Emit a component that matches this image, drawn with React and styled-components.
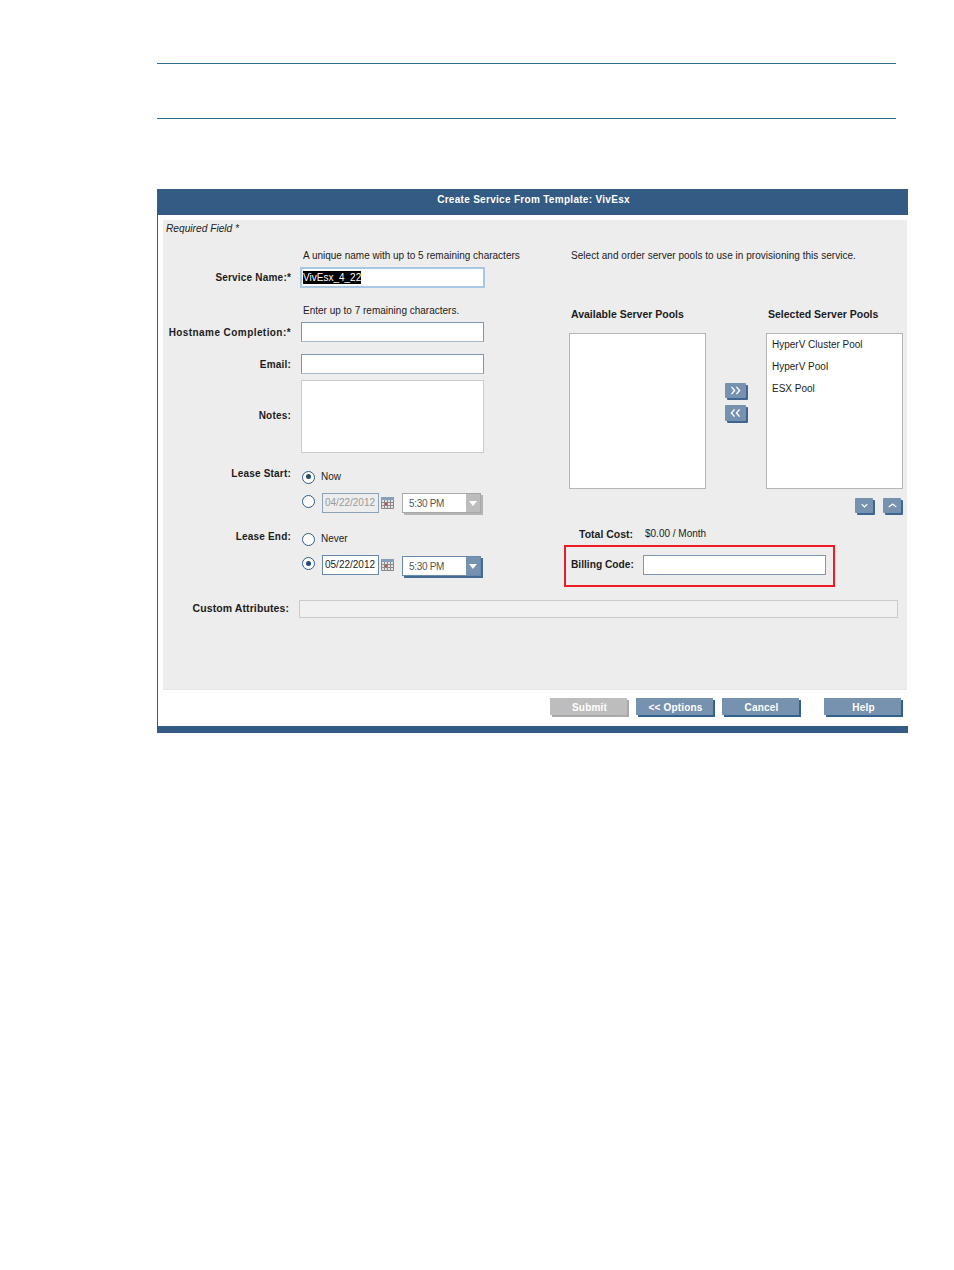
import React from 'react';
import styled, { createGlobalStyle } from 'styled-components';

const GlobalStyle = createGlobalStyle`
  html, body {
    margin: 0;
    padding: 0;
    background: #fff;
    font-family: "Liberation Sans", Arial, sans-serif;
    font-size: 10px;
    color: #1c1c1c;
  }
`;

const ChevronsRight = () => (
  <svg width="11" height="9" viewBox="0 0 12 10" fill="none" stroke="#fff" strokeWidth="1.5">
    <path d="M1.5 1l3.5 4-3.5 4M7 1l3.5 4L7 9" />
  </svg>
);

const ChevronsLeft = () => (
  <svg width="11" height="10" viewBox="0 0 12 10" fill="none" stroke="#fff" strokeWidth="1.5">
    <path d="M5 1L1.5 5 5 9M10.5 1L7 5l3.5 4" />
  </svg>
);

const ChevronDown = () => (
  <svg width="7" height="5" viewBox="0 0 10 6" fill="none" stroke="#fff" strokeWidth="1.8">
    <path d="M1 1l4 4 4-4" />
  </svg>
);

const ChevronUp = () => (
  <svg width="9" height="5" viewBox="0 0 12 6" fill="none" stroke="#fff" strokeWidth="1.6">
    <path d="M1 5l5-4 5 4" />
  </svg>
);

const CalendarIcon = () => (
  <svg width="13" height="12" viewBox="0 0 13 12">
    <rect x="0" y="0" width="13" height="12" fill="#e4e4e4" />
    <rect x="0" y="0" width="13" height="3" fill="#86a0bb" />
    <path d="M.5 3v8.5h12V3M3.5 3v8.5M6.5 3v8.5M9.5 3v8.5M.5 5.5h12M.5 8.5h12" stroke="#8a8a8a" fill="none" />
    <rect x="4" y="6" width="2" height="2" fill="#e8404a" />
  </svg>
);

const App = () => (
  <>
    <GlobalStyle />
    <Page>
      <RuleBlock />
      <Panel>
        <PanelHeader>Create Service From Template: VivEsx</PanelHeader>
        <PanelBody>
          <FormArea>
            <Required>Required Field *</Required>
            <Columns>
              <LeftColumn>
                <HintRow $top={12}>A unique name with up to 5 remaining characters</HintRow>
                <Row $top={3}>
                  <Label>Service Name:*</Label>
                  <FocusInput><Selected>VivEsx_4_22</Selected></FocusInput>
                </Row>
                <HintRow $top={15}>Enter up to 7 remaining characters.</HintRow>
                <Row $top={3}>
                  <Label $wide>Hostname Completion:*</Label>
                  <TextBox />
                </Row>
                <Row $top={12}>
                  <Label>Email:</Label>
                  <TextBox />
                </Row>
                <Row $top={6}>
                  <Label $up>Notes:</Label>
                  <NotesBox />
                </Row>
                <TopRow $top={14}>
                  <TopLabel>Lease Start:</TopLabel>
                  <ChoiceLine>
                    <Radio $checked />
                    <ChoiceText>Now</ChoiceText>
                  </ChoiceLine>
                </TopRow>
                <DateLine $top={6}>
                  <Radio $raised />
                  <DateBox $disabled>04/22/2012</DateBox>
                  <CalendarSlot><CalendarIcon /></CalendarSlot>
                  <TimeSelect $disabled>
                    <TimeText>5:30 PM</TimeText>
                    <TimeArrow $disabled />
                  </TimeSelect>
                </DateLine>
                <TopRow $top={14}>
                  <TopLabel $tall>Lease End:</TopLabel>
                  <ChoiceLine>
                    <Radio />
                    <ChoiceText>Never</ChoiceText>
                  </ChoiceLine>
                </TopRow>
                <DateLine $top={6}>
                  <Radio $checked $raised />
                  <DateBox>05/22/2012</DateBox>
                  <CalendarSlot><CalendarIcon /></CalendarSlot>
                  <TimeSelect $lower>
                    <TimeText>5:30 PM</TimeText>
                    <TimeArrow />
                  </TimeSelect>
                </DateLine>
              </LeftColumn>
              <RightColumn>
                <HintLine>Select and order server pools to use in provisioning this service.</HintLine>
                <PoolHeadings>
                  <PoolHeading>Available Server Pools</PoolHeading>
                  <PoolHeading>Selected Server Pools</PoolHeading>
                </PoolHeadings>
                <PoolLists>
                  <PoolList />
                  <Movers>
                    <SmallButton $w={21} $h={15}><ChevronsRight /></SmallButton>
                    <SmallButton $w={21} $h={16}><ChevronsLeft /></SmallButton>
                  </Movers>
                  <PoolList>
                    <PoolItem>HyperV Cluster Pool</PoolItem>
                    <PoolItem>HyperV Pool</PoolItem>
                    <PoolItem>ESX Pool</PoolItem>
                  </PoolList>
                </PoolLists>
                <Reorder>
                  <SmallButton $w={18} $h={15}><ChevronDown /></SmallButton>
                  <SmallButton $w={18} $h={15}><ChevronUp /></SmallButton>
                </Reorder>
                <CostRow>
                  <CostLabel>Total Cost:</CostLabel>
                  <span>$0.00 / Month</span>
                </CostRow>
                <BillingBox>
                  <BillingLabel>Billing Code:</BillingLabel>
                  <BillingInput />
                </BillingBox>
              </RightColumn>
            </Columns>
            <CustomRow>
              <CustomLabel>Custom Attributes:</CustomLabel>
              <CustomBox />
            </CustomRow>
          </FormArea>
          <Footer>
            <FooterButton $disabled>Submit</FooterButton>
            <FooterButton>&lt;&lt; Options</FooterButton>
            <FooterButton>Cancel</FooterButton>
            <FooterButton $gap={25}>Help</FooterButton>
          </Footer>
        </PanelBody>
        <PanelBar />
      </Panel>
    </Page>
  </>
);

export default App;

const Page = styled.div`
  width: 954px;
  height: 1270px;
  padding: 63px 0 0 157px;
  box-sizing: border-box;
`;

const RuleBlock = styled.div`
  width: 739px;
  height: 56px;
  box-sizing: border-box;
  border-top: 1px solid #2f6b8f;
  border-bottom: 1px solid #2f6b8f;
`;

const Panel = styled.div`
  width: 751px;
  margin-top: 70px;
`;

const PanelHeader = styled.div`
  height: 26px;
  padding-left: 2px;
  box-sizing: border-box;
  background: #335b84;
  color: #fff;
  font-weight: bold;
  font-size: 10px;
  letter-spacing: 0.3px;
  line-height: 21px;
  text-align: center;
`;

const PanelBody = styled.div`
  border-left: 1px solid #335b84;
  padding: 5px 1px 0 5px;
  background: #fff;
`;

const FormArea = styled.div`
  height: 469px;
  background: #ededed;
  box-sizing: border-box;
`;

const Required = styled.div`
  height: 16px;
  padding: 1px 0 0 3px;
  box-sizing: border-box;
  line-height: 15px;
  font-style: italic;
  font-size: 10.2px;
`;

const Columns = styled.div`
  display: flex;
  height: 362px;
`;

const LeftColumn = styled.div`
  width: 406px;
`;

const RightColumn = styled.div`
  width: 338px;
`;

const HintRow = styled.div`
  margin-top: ${(p) => p.$top}px;
  height: 16px;
  line-height: 16px;
  padding-left: 140px;
  font-size: 10px;
`;

const Row = styled.div`
  display: flex;
  align-items: center;
  column-gap: 10px;
  margin-top: ${(p) => p.$top}px;
`;

const TopRow = styled(Row)`
  align-items: flex-start;
  height: 20px;
`;

const Label = styled.div`
  width: 128px;
  margin-top: ${(p) => (p.$up ? -2 : 0)}px;
  text-align: right;
  font-weight: bold;
  font-size: 10px;
  letter-spacing: ${(p) => (p.$wide ? 0.43 : 0.2)}px;
  white-space: nowrap;
`;

const TopLabel = styled(Label)`
  line-height: ${(p) => (p.$tall ? 16 : 14)}px;
`;

const TextBox = styled.div`
  width: 183px;
  height: 20px;
  box-sizing: border-box;
  background: #fff;
  border: 1px solid #7d97b3;
  border-bottom-color: #a9b9cb;
`;

const FocusInput = styled.div`
  width: 185px;
  height: 21px;
  margin-left: -1px;
  box-sizing: border-box;
  background: #fff;
  border: 2px solid #a9c6e4;
  padding: 2px 1px;
  display: flex;
  align-items: center;
`;

const Selected = styled.span`
  background: #000;
  color: #fff;
  font-size: 10px;
  line-height: 13px;
`;

const NotesBox = styled.div`
  width: 183px;
  height: 73px;
  box-sizing: border-box;
  background: #fff;
  border: 1px solid #cbcbcb;
`;

const ChoiceLine = styled.div`
  display: flex;
  align-items: center;
  height: 20px;
  column-gap: 6px;
  margin-left: 1px;
`;

const ChoiceText = styled.span`
  font-size: 10px;
  margin-top: -2px;
`;

const Radio = styled.span`
  position: relative;
  flex: none;
  width: 13px;
  height: 13px;
  box-sizing: border-box;
  border: 1.5px solid #2f5b86;
  border-radius: 50%;
  background: #fff;
  align-self: ${(p) => (p.$raised ? 'flex-start' : 'center')};
  margin-top: ${(p) => (p.$raised ? 2 : 0)}px;

  &::after {
    content: '';
    display: ${(p) => (p.$checked ? 'block' : 'none')};
    position: absolute;
    top: 2.5px;
    left: 2.5px;
    width: 5px;
    height: 5px;
    border-radius: 50%;
    background: #234a72;
  }
`;

const DateLine = styled.div`
  display: flex;
  margin-top: ${(p) => p.$top}px;
  padding-left: 139px;
  height: 22px;
  align-items: flex-start;
`;

const DateBox = styled.div`
  width: 57px;
  height: 20px;
  margin-left: 7px;
  box-sizing: border-box;
  border: 1px solid ${(p) => (p.$disabled ? '#8da3ba' : '#6a8aab')};
  background: ${(p) => (p.$disabled ? '#ededed' : '#fff')};
  color: ${(p) => (p.$disabled ? '#9a9a9a' : '#1c1c1c')};
  font-size: 10px;
  line-height: 18px;
  padding-left: 2px;
  white-space: nowrap;
`;

const CalendarSlot = styled.div`
  display: flex;
  width: 13px;
  padding: 4px 0 0 2px;
`;

const TimeSelect = styled.div`
  display: flex;
  width: 79px;
  height: 20px;
  margin: ${(p) => (p.$lower ? 1 : 0)}px 0 0 8px;
  box-sizing: border-box;
  border: 1px solid ${(p) => (p.$disabled ? '#a8a8a8' : '#6a8aab')};
  background: #fff;
  box-shadow: 2px 2px 0 ${(p) => (p.$disabled ? '#b5b5b5' : '#456a94')};
`;

const TimeText = styled.span`
  flex: 1;
  padding: 4px 0 0 6px;
  font-size: 10px;
  letter-spacing: -0.3px;
  color: #555;
`;

const TimeArrow = styled.span`
  width: 14px;
  display: flex;
  align-items: center;
  justify-content: center;
  background: ${(p) => (p.$disabled ? '#bdbdbd' : '#7692ae')};

  &::after {
    content: '';
    border-left: 4px solid transparent;
    border-right: 4px solid transparent;
    border-top: 5px solid #fff;
  }
`;

const HintLine = styled.div`
  margin-top: 12px;
  height: 16px;
  line-height: 16px;
  padding-left: 2px;
  font-size: 10px;
  letter-spacing: 0.03px;
`;

const PoolHeadings = styled.div`
  display: grid;
  grid-template-columns: 197px 1fr;
  margin-top: 42px;
  padding-left: 2px;
`;

const PoolHeading = styled.div`
  height: 16px;
  line-height: 16px;
  font-weight: bold;
  font-size: 10.5px;
`;

const PoolLists = styled.div`
  display: flex;
  margin-top: 11px;
  height: 156px;
`;

const PoolList = styled.div`
  width: 137px;
  box-sizing: border-box;
  border: 1px solid #b5b5b5;
  background: #fff;
  padding-left: 5px;
`;

const PoolItem = styled.div`
  height: 22px;
  line-height: 22px;
  font-size: 10px;
`;

const Movers = styled.div`
  display: flex;
  flex-direction: column;
  row-gap: 7px;
  width: 23px;
  margin: 50px 18px 0 19px;
`;

const SmallButton = styled.div`
  width: ${(p) => p.$w}px;
  height: ${(p) => p.$h}px;
  display: flex;
  align-items: center;
  justify-content: center;
  background: #7692ae;
  border-radius: 1px;
  box-shadow: 2px 2px 0 #3f6690;
`;

const Reorder = styled.div`
  display: flex;
  justify-content: flex-end;
  column-gap: 10px;
  margin-top: 9px;
  padding-right: 6px;
`;

const CostRow = styled.div`
  display: flex;
  margin-top: 13px;
  height: 16px;
  line-height: 16px;
  padding-left: 10px;
  font-size: 10px;
`;

const CostLabel = styled.span`
  width: 66px;
  font-weight: bold;
  font-size: 10.5px;
`;

const BillingBox = styled.div`
  display: flex;
  align-items: center;
  width: 271px;
  height: 42px;
  margin: 3px 0 0 -5px;
  box-sizing: border-box;
  border: 2px solid #ed1c24;
  padding: 0 0 2px 5px;
`;

const BillingLabel = styled.span`
  width: 72px;
  margin-top: -2px;
  font-weight: bold;
  font-size: 10.2px;
`;

const BillingInput = styled.div`
  width: 183px;
  height: 20px;
  box-sizing: border-box;
  background: #fff;
  border: 1px solid #7d97b3;
`;

const CustomRow = styled.div`
  display: flex;
  align-items: center;
  column-gap: 10px;
  margin-top: 2px;
`;

const CustomLabel = styled.div`
  width: 126px;
  padding-bottom: 2px;
  text-align: right;
  font-weight: bold;
  font-size: 10.5px;
  letter-spacing: 0.1px;
  white-space: nowrap;
`;

const CustomBox = styled.div`
  width: 599px;
  height: 18px;
  box-sizing: border-box;
  background: #f1f1f1;
  border: 1px solid #cbcbcb;
`;

const Footer = styled.div`
  display: flex;
  height: 37px;
  box-sizing: border-box;
  padding: 8px 6px 0 0;
  justify-content: flex-end;
  column-gap: 9px;
  background: #fff;
  border-top: 1px solid #e6e6e6;
`;

const FooterButton = styled.div`
  width: 75px;
  height: 17px;
  padding-left: 2px;
  margin-left: ${(p) => (p.$gap ? p.$gap - 9 : 0)}px;
  background: ${(p) => (p.$disabled ? '#bdbdbd' : '#7692ae')};
  box-shadow: 2px 2px 0 ${(p) => (p.$disabled ? '#a9a9a9' : '#33608f')};
  color: #fff;
  font-weight: bold;
  font-size: 10px;
  letter-spacing: 0.2px;
  line-height: 20px;
  text-align: center;
`;

const PanelBar = styled.div`
  height: 7px;
  background: #335b84;
`;
